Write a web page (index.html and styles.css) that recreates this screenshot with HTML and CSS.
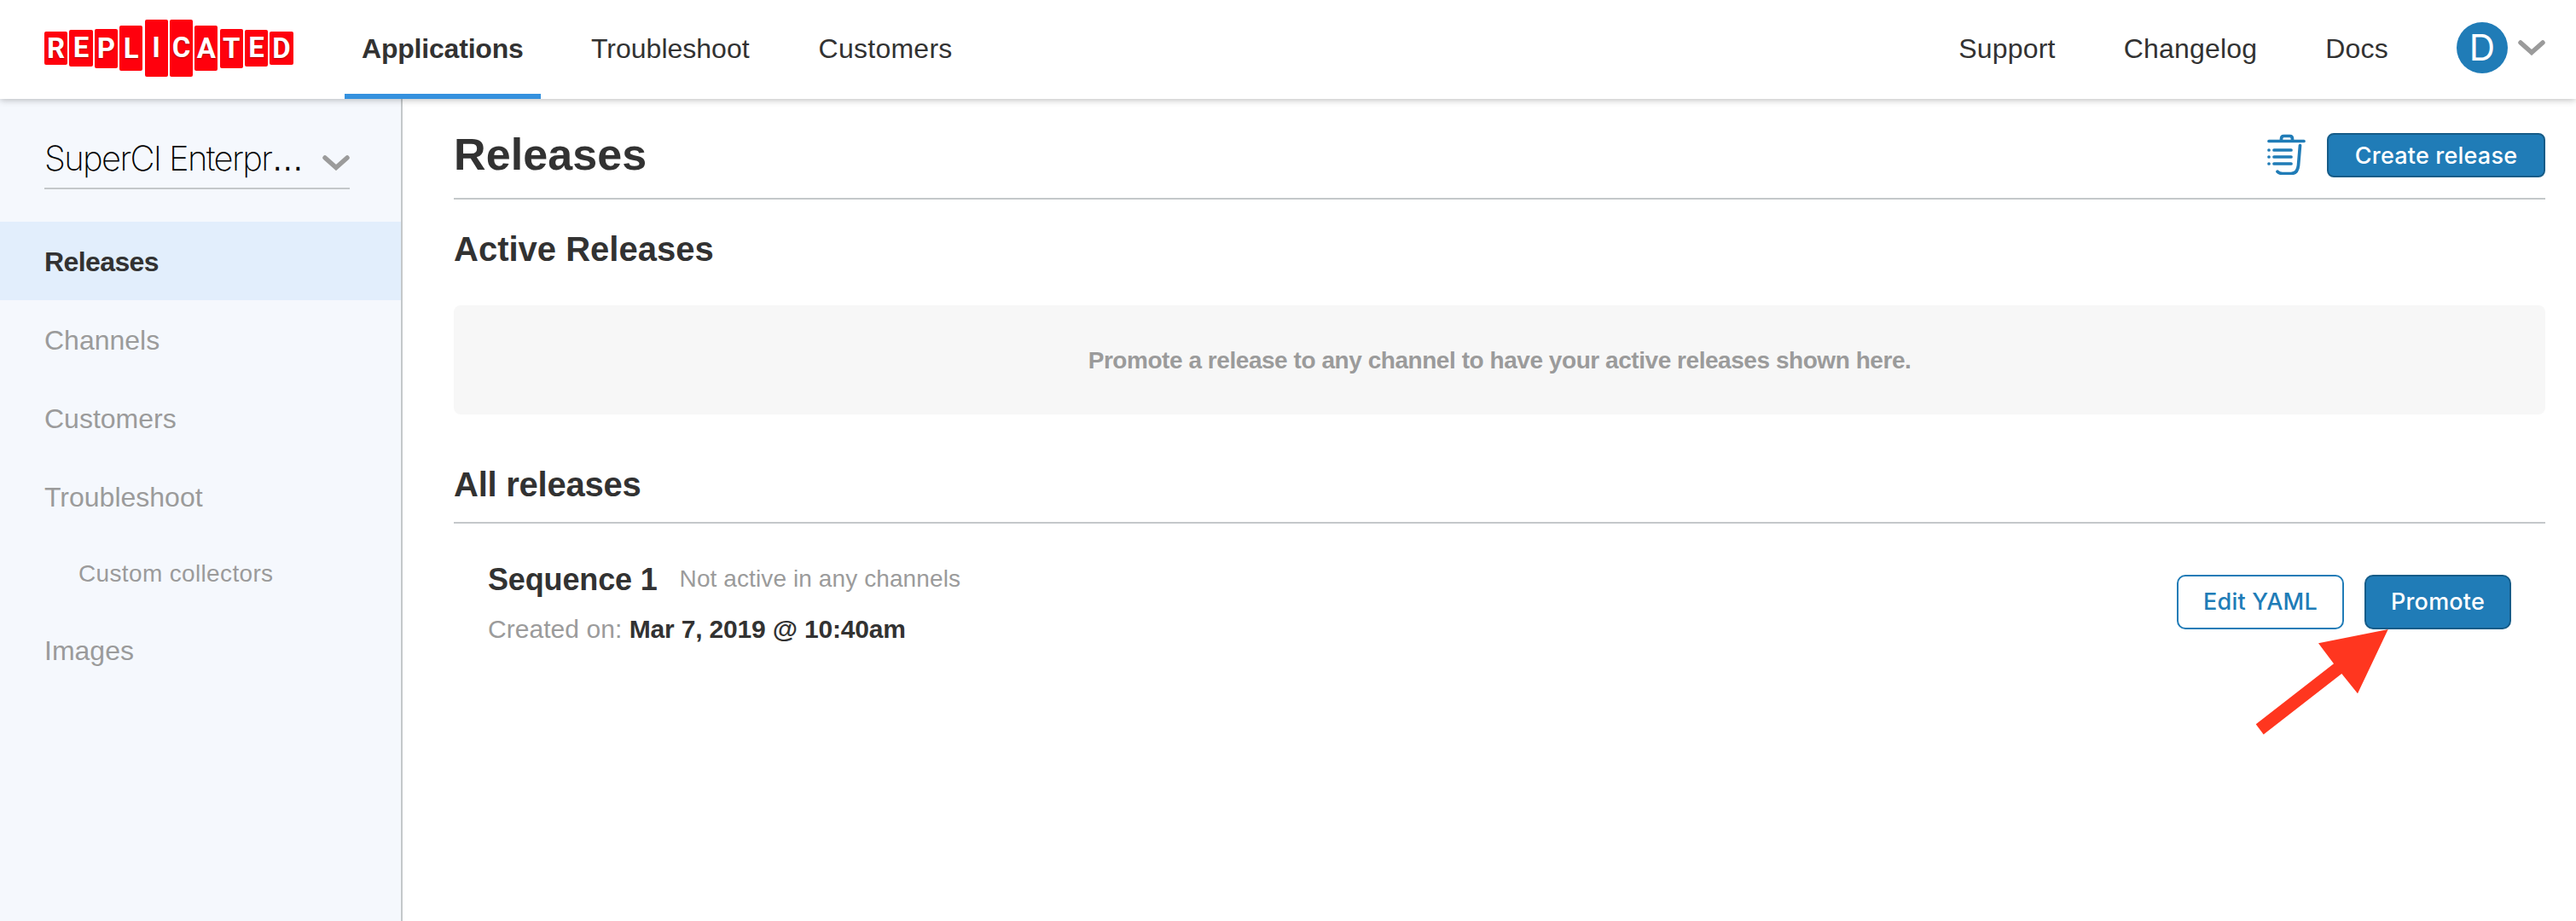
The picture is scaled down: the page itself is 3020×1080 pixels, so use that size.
FILE: index.html
```html
<!DOCTYPE html>
<html lang="en">
<head>
<meta charset="utf-8">
<title>Releases</title>
<link rel="stylesheet" href="styles.css">
</head>
<body>
<header class="topbar">
  <a class="logo" aria-label="Replicated">
    <span class="tile t1">R</span><span class="tile t2">E</span><span class="tile t3">P</span><span class="tile t4">L</span><span class="tile t5">I</span><span class="tile t5">C</span><span class="tile t4">A</span><span class="tile t3">T</span><span class="tile t2">E</span><span class="tile t1">D</span>
  </a>
  <nav class="tabs">
    <a class="tab tab-active">Applications</a>
    <a class="tab">Troubleshoot</a>
    <a class="tab tab-last">Customers</a>
  </nav>
  <nav class="links">
    <a>Support</a>
    <a>Changelog</a>
    <a>Docs</a>
  </nav>
  <div class="account">
    <span class="avatar">D</span>
    <svg class="chevron" viewBox="0 0 32 18"><path d="M3 3L16 14.500L29 3"/></svg>
  </div>
</header>
<div class="page">
  <aside class="sidebar">
    <div class="app-select">
      <span class="app-name">SuperCI Enterpr<span class="dots">…</span></span>
      <svg class="chevron" viewBox="0 0 32 18"><path d="M3 3L16 14.500L29 3"/></svg>
    </div>
    <a class="item item-active">Releases</a>
    <a class="item">Channels</a>
    <a class="item">Customers</a>
    <a class="item">Troubleshoot</a>
    <a class="item item-sub">Custom collectors</a>
    <a class="item">Images</a>
  </aside>
  <main class="main">
    <div class="title-row">
      <h1>Releases</h1>
      <svg class="trash" viewBox="0 0 46 48">
        <path d="M2 8.500H43M16.500 8V6Q16.500 2.500 19.500 2.500H26.500Q29.500 2.500 29.500 6V8M38.500 13.500L36.500 37Q35.500 46.500 28 46.500H18Q14 46.500 12 44.200"/>
        <path d="M8 19H28M8 27H28M8 35H28M2 19H2.010M2 27H2.010M2 35H2.010"/>
      </svg>
      <button class="btn btn-primary btn-create">Create release</button>
    </div>
    <h2 class="active-title">Active Releases</h2>
    <div class="empty">Promote a release to any channel to have your active releases shown here.</div>
    <h2 class="all-title">All releases</h2>
    <div class="release">
      <div class="release-info">
        <div class="release-head"><span class="sequence">Sequence 1</span><span class="status">Not active in any channels</span></div>
        <div class="created">Created on: <b>Mar 7, 2019 @ 10:40am</b></div>
      </div>
      <div class="actions">
        <button class="btn btn-outline">Edit YAML</button>
        <button class="btn btn-primary btn-promote">Promote</button>
        <svg class="arrow" viewBox="0 0 156 124"><path d="M155.700 0L120 75.300L101.300 52L9.700 123.300L.700 111.300L92 40.300L74 16.300Z"/></svg>
      </div>
    </div>
  </main>
</div>
</body>
</html>
```
FILE: styles.css
```css
* { box-sizing: border-box; }
body {
  margin: 0;
  width: 3020px;
  height: 1080px;
  overflow: hidden;
  display: flex;
  flex-direction: column;
  background: #fff;
  color: #323232;
  font: 32px/40px "Liberation Sans", Arial, sans-serif;
}
h1, h2 { margin: 0; font-weight: 700; }
.topbar {
  position: relative;
  z-index: 1;
  display: flex;
  align-items: center;
  height: 116px;
  flex: none;
  padding: 0 36px 0 52px;
  background: #fff;
  box-shadow: 0 1px 8px rgba(0, 0, 0, .28);
}
.logo { display: flex; align-items: center; gap: 2.200px; width: 292px; height: 116px; padding-bottom: 3px; }
.tile {
  display: flex;
  align-items: center;
  justify-content: center;
  width: 27.200px;
  border-radius: 2px;
  background: #ff000d;
  color: #fff;
  font: 700 33px/38px Roboto, sans-serif;
  text-shadow: 0 1px 2px rgba(0, 0, 0, .35);
}
.t1 { height: 38.600px; }
.t2 { height: 42.400px; }
.t3 { height: 46px; }
.t4 { height: 53px; }
.t5 { height: 66.400px; }
.tabs { display: flex; gap: 40px; margin-left: 60px; }
.tab { height: 116px; padding: 37px 20px 0; }
.tab + .tab { margin-left: -1px; }
.tabs .tab-last { margin-left: 1px; letter-spacing: .250px; }
.tab-active { width: 230px; border-bottom: 6px solid #3591de; font-weight: 700; letter-spacing: -.200px; }
.links { display: flex; gap: 80px; margin: 0 80px 2px auto; letter-spacing: .2px; }
.account { display: flex; align-items: center; gap: 12px; padding-bottom: 4px; }
.avatar {
  display: flex;
  align-items: center;
  justify-content: center;
  width: 60px;
  height: 60px;
  border-radius: 50%;
  background: #207cb7;
  color: #fff;
  font: 400 42px/60px Inter, sans-serif;
}
.chevron { width: 32px; height: 18px; fill: none; stroke: #9b9b9b; stroke-width: 5.500; stroke-linecap: round; }
.page { display: flex; flex: 1; }
.sidebar { width: 472px; border-right: 2px solid #c4c8ca; background: #f5f8fd; }
.app-select {
  display: flex;
  justify-content: space-between;
  align-items: center;
  width: 358px;
  height: 62px;
  margin: 44px 0 38px 52px;
  border-bottom: 2px solid #c4c8ca;
}
.app-select .chevron { margin-top: 2px; }
.app-name { padding-bottom: 7px; color: #000; font: 200 40px/48px Inter, sans-serif; letter-spacing: -1.650px; white-space: nowrap; }
.dots { font-family: "Liberation Sans", sans-serif; font-size: 38px; letter-spacing: 0; }
.item { display: block; height: 92px; padding: 27px 52px 0; color: #9b9b9b; }
.item-active { background: #e2eefc; color: #323232; font-weight: 700; letter-spacing: -.600px; }
.item-sub { height: 88px; padding: 25px 92px 0; font-size: 28px; letter-spacing: .35px; }
.main { flex: 1; padding: 0 36px 0 60px; }
.title-row {
  display: flex;
  align-items: center;
  height: 118px;
  padding-top: 16px;
  border-bottom: 2px solid #c4c8ca;
}
h1 { margin: 0 auto 2px 0; font-size: 52px; line-height: 60px; letter-spacing: .1px; }
.trash {
  width: 46px;
  height: 48px;
  margin: 0 24px 2px 0;
  fill: none;
  stroke: #207cb7;
  stroke-width: 3.700;
  stroke-linecap: round;
}
.btn {
  padding: 0;
  border: 2px solid #165c88;
  border-radius: 10px;
  font: 500 27px/32px Inter, sans-serif;
  letter-spacing: .2px;
}
.btn-primary { background: #207cb7; color: #fff; }
.btn-outline { width: 196px; height: 64px; border-color: #207cb7; background: #fff; color: #207cb7; }
.btn-create { width: 256px; height: 52px; padding-top: 1px; border-radius: 8px; }
.btn-promote { width: 172px; height: 64px; }
h2 { font-size: 40px; line-height: 48px; }
.active-title { padding: 34px 0 42px; }
.empty {
  display: flex;
  align-items: center;
  justify-content: center;
  height: 128px;
  padding-top: 2px;
  border-radius: 8px;
  background: #f7f7f7;
  color: #9b9b9b;
  font-size: 28px;
  font-weight: 700;
  letter-spacing: -.450px;
}
.all-title { height: 128px; padding-top: 58px; border-bottom: 2px solid #c4c8ca; letter-spacing: -.250px; }
.release { display: flex; justify-content: space-between; padding: 44px 40px 0; }
.release-head { display: flex; align-items: flex-start; gap: 26px; height: 48px; }
.sequence { font-size: 36px; font-weight: 700; line-height: 44px; letter-spacing: -.150px; }
.status { padding-top: 1px; color: #9b9b9b; font-size: 28px; line-height: 40px; letter-spacing: .1px; }
.created { padding-top: 12px; color: #9b9b9b; font-size: 30px; letter-spacing: .05px; }
.created b { color: #323232; letter-spacing: -.180px; }
.actions { position: relative; display: flex; gap: 24px; padding-top: 16px; }
.arrow { position: absolute; left: 92px; top: 80px; width: 156px; height: 124px; fill: #ff361f; }
```
